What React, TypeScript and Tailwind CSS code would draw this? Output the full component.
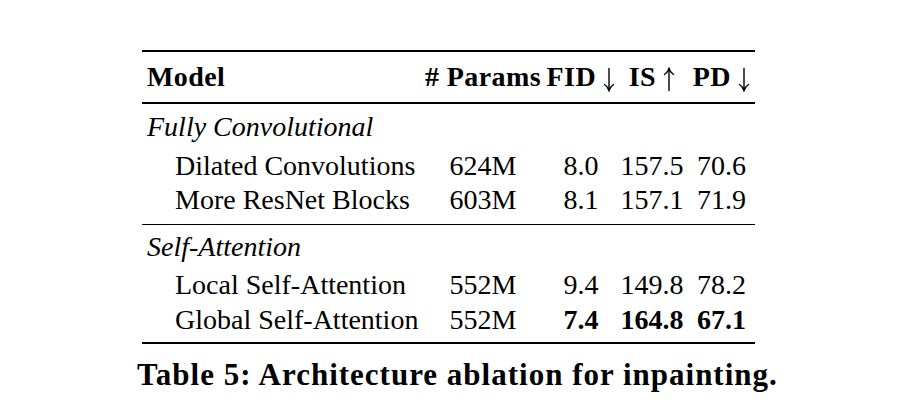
function Arrow({ up }: { up?: boolean }) {
  return (
    <svg
      width="12"
      height="25"
      viewBox="0 0 12 25"
      className={`inline-block align-[-6px] ${up ? "rotate-180" : ""}`}
      fill="none"
      stroke="currentColor"
      strokeWidth="1.4"
      strokeLinecap="round"
    >
      <path d="M6 1.5V23" />
      <path d="M1.5 17.5C3.8 19 5.3 21 6 23.5C6.7 21 8.2 19 10.5 17.5" />
    </svg>
  );
}

export default function App() {
  const cols = "grid grid-cols-[278px_126px_70px_72px_67px] items-center";
  const rows = [
    {
      section: "Fully Convolutional",
      items: [
        { name: "Dilated Convolutions", params: "624M", fid: "8.0", is: "157.5", pd: "70.6", bold: false },
        { name: "More ResNet Blocks", params: "603M", fid: "8.1", is: "157.1", pd: "71.9", bold: false },
      ],
    },
    {
      section: "Self-Attention",
      items: [
        { name: "Local Self-Attention", params: "552M", fid: "9.4", is: "149.8", pd: "78.2", bold: false },
        { name: "Global Self-Attention", params: "552M", fid: "7.4", is: "164.8", pd: "67.1", bold: true },
      ],
    },
  ];

  return (
    <div className="w-[901px] h-[417px] bg-white text-black font-['Liberation_Serif',serif] pt-[50px] pl-[142px]">
      <div className="w-[613px]">
        {/* header */}
        <div className={`${cols} border-t-2 border-b-2 border-black h-[54px] text-[28px] font-bold tracking-[0.4px]`}>
          <div className="pl-[5px]">Model</div>
          <div className="text-center"># Params</div>
          <div className="text-center">
            FID <Arrow />
          </div>
          <div className="text-center">
            IS <Arrow up />
          </div>
          <div className="text-center">
            PD <Arrow />
          </div>
        </div>

        {rows.map((group, gi) => (
          <div
            key={group.section}
            className={`${gi === 0 ? "pt-[6px] pb-[10px] border-b-[1.5px]" : "pt-[5px] pb-[9px] border-b-2"} border-black text-[28px]`}
          >
            <div className="h-[34.5px] flex items-center pl-[5px] italic">{group.section}</div>
            {group.items.map((r) => (
              <div key={r.name} className={`${cols} h-[34.5px]`}>
                <div className="pl-[33px]">{r.name}</div>
                <div className="text-center">{r.params}</div>
                <div className={`text-center ${r.bold ? "font-bold" : ""}`}>{r.fid}</div>
                <div className={`text-center ${r.bold ? "font-bold" : ""}`}>{r.is}</div>
                <div className={`text-center ${r.bold ? "font-bold" : ""}`}>{r.pd}</div>
              </div>
            ))}
          </div>
        ))}
      </div>

      <div className="-ml-[5px] mt-[15px] text-[31px] leading-none font-bold tracking-[1px] whitespace-nowrap">
        Table 5: Architecture ablation for inpainting.
      </div>
    </div>
  );
}
